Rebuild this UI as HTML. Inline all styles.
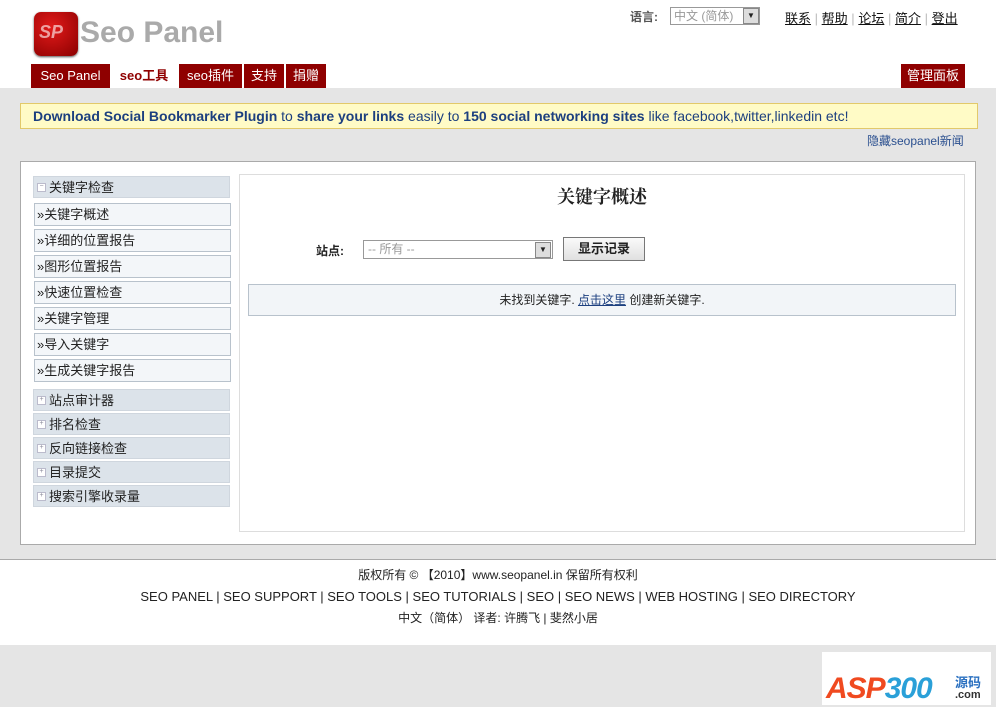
<!DOCTYPE html>
<html><head><meta charset="utf-8"><style>
*{margin:0;padding:0;box-sizing:border-box}
body{width:996px;height:707px;position:relative;background:#fff;font-family:"Liberation Sans","Noto Sans CJK SC",sans-serif;font-size:12px;color:#222;overflow:hidden}
.a{position:absolute}
.tab{position:absolute;top:64px;height:24px;background:#8f0000;color:#fff;font-size:13px;line-height:24px;text-align:center}
.side{position:absolute;left:33px;width:197px;height:22px;background:#dce3ea;border:1px solid #cfd6de;line-height:21px;font-size:13px;color:#222;padding-left:15px}
.side:before{content:"+";position:absolute;left:3px;top:6px;width:7px;height:7px;border:1px solid #bbc;background:#fff;font-size:7px;line-height:5px;text-align:center;color:#889}
.side.m:before{content:"−"}
.item{position:absolute;left:34px;width:197px;height:23px;background:#f3f6f9;border:1px solid #b8c2cc;line-height:22px;font-size:13px;padding-left:2px}
</style></head><body>
<div class="a" style="left:34px;top:12px;width:44px;height:44px;border-radius:7px;background:radial-gradient(circle at 40% 35%,#e21a1a,#8a0000);box-shadow:0 1px 2px #555"></div>
<div class="a" style="left:39px;top:22px;color:#fff;font:italic bold 18px 'Liberation Sans',sans-serif;opacity:.6">SP</div>
<div class="a" style="left:80px;top:16px;font:bold 30px 'Liberation Sans',sans-serif;color:#aaa">Seo Panel</div>
<div class="a" style="left:630px;top:8px;font-weight:bold;color:#555;font-size:12px">语言:</div>
<div class="a" style="left:670px;top:7px;width:90px;height:18px;border:1px solid #999;background:#fff;color:#999;font-size:12px;line-height:16px;padding-left:3px">中文 (简体)</div>
<div class="a" style="left:743px;top:8px;width:16px;height:16px;background:#ddd;border:1px solid #888;font-size:8px;text-align:center;line-height:14px">▼</div>
<div class="a" style="left:785px;top:8px;font-size:13px;color:#111"><u>联系</u> <span style="color:#bbb">|</span> <u>帮助</u> <span style="color:#bbb">|</span> <u>论坛</u> <span style="color:#bbb">|</span> <u>简介</u> <span style="color:#bbb">|</span> <u>登出</u></div>
<div class="tab" style="left:31px;width:79px">Seo Panel</div>
<div class="tab" style="left:111px;width:66px;background:#fff;color:#8f0000;font-weight:bold">seo工具</div>
<div class="tab" style="left:179px;width:63px">seo插件</div>
<div class="tab" style="left:244px;width:40px">支持</div>
<div class="tab" style="left:286px;width:40px">捐赠</div>
<div class="tab" style="left:901px;width:64px">管理面板</div>
<div class="a" style="left:0;top:88px;width:996px;height:472px;background:#e5e5e5;border-bottom:1px solid #aaa"></div>
<div class="a" style="left:20px;top:103px;width:958px;height:26px;background:#fffbc6;border:1px solid #e2c96a;color:#1c3f7f;font-size:14px;line-height:24px;padding-left:12px;white-space:nowrap"><b>Download Social Bookmarker Plugin</b> to <b>share your links</b> easily to <b>150 social networking sites</b> like facebook,twitter,linkedin etc!</div>
<div class="a" style="left:867px;top:132px;color:#2a4f8f;font-size:12px">隐藏seopanel新闻</div>
<div class="a" style="left:20px;top:161px;width:956px;height:384px;background:#fff;border:1px solid #aaa"></div>
<div class="side m" style="top:176px">关键字检查</div>
<div class="item" style="top:203px">»关键字概述</div>
<div class="item" style="top:229px">»详细的位置报告</div>
<div class="item" style="top:255px">»图形位置报告</div>
<div class="item" style="top:281px">»快速位置检查</div>
<div class="item" style="top:307px">»关键字管理</div>
<div class="item" style="top:333px">»导入关键字</div>
<div class="item" style="top:359px">»生成关键字报告</div>
<div class="side" style="top:389px">站点审计器</div>
<div class="side" style="top:413px">排名检查</div>
<div class="side" style="top:437px">反向链接检查</div>
<div class="side" style="top:461px">目录提交</div>
<div class="side" style="top:485px">搜索引擎收录量</div>
<div class="a" style="left:239px;top:174px;width:726px;height:358px;border:1px solid #ddd"></div>
<div class="a" style="left:239px;top:183px;width:726px;text-align:center;font:bold 18px 'Liberation Serif','Noto Serif CJK SC',serif">关键字概述</div>
<div class="a" style="left:316px;top:242px;font-weight:bold;font-size:12px">站点:</div>
<div class="a" style="left:363px;top:240px;width:190px;height:19px;border:1px solid #999;color:#999;line-height:17px;padding-left:4px">-- 所有 --</div>
<div class="a" style="left:535px;top:242px;width:16px;height:16px;background:#ddd;border:1px solid #888;font-size:8px;text-align:center;line-height:14px">▼</div>
<div class="a" style="left:563px;top:237px;width:82px;height:24px;background:linear-gradient(#fafafa,#e0e0e0);border:1px solid #777;font-weight:bold;text-align:center;line-height:22px;font-size:13px">显示记录</div>
<div class="a" style="left:248px;top:284px;width:708px;height:32px;background:#f2f5f8;border:1px solid #b8c2cc;text-align:center;line-height:30px">未找到关键字. <u style="color:#1c3f7f">点击这里</u> 创建新关键字.</div>
<div class="a" style="left:0;top:565px;width:996px;text-align:center;font-size:12px;line-height:21px">版权所有 © 【2010】www.seopanel.in 保留所有权利<br><span style="font-size:13px">SEO PANEL | SEO SUPPORT | SEO TOOLS | SEO TUTORIALS | SEO | SEO NEWS | WEB HOSTING | SEO DIRECTORY</span><br>中文（简体） 译者: 许腾飞 | 斐然小居</div>
<div class="a" style="left:0;top:645px;width:996px;height:62px;background:#e5e5e5"></div>
<div class="a" style="left:822px;top:652px;width:169px;height:53px;background:#fff"></div>
<div class="a" style="left:826px;top:672px;font:italic bold 30px 'Liberation Sans',sans-serif;color:#f04a20;letter-spacing:-1px">ASP<span style="color:#2aa0d8">300</span></div>
<div class="a" style="left:955px;top:672px;font-weight:bold;color:#2a70c0;font-size:13px">源码</div>
<div class="a" style="left:955px;top:689px;font-weight:bold;color:#333;font-size:11px">.com</div>
</body></html>
